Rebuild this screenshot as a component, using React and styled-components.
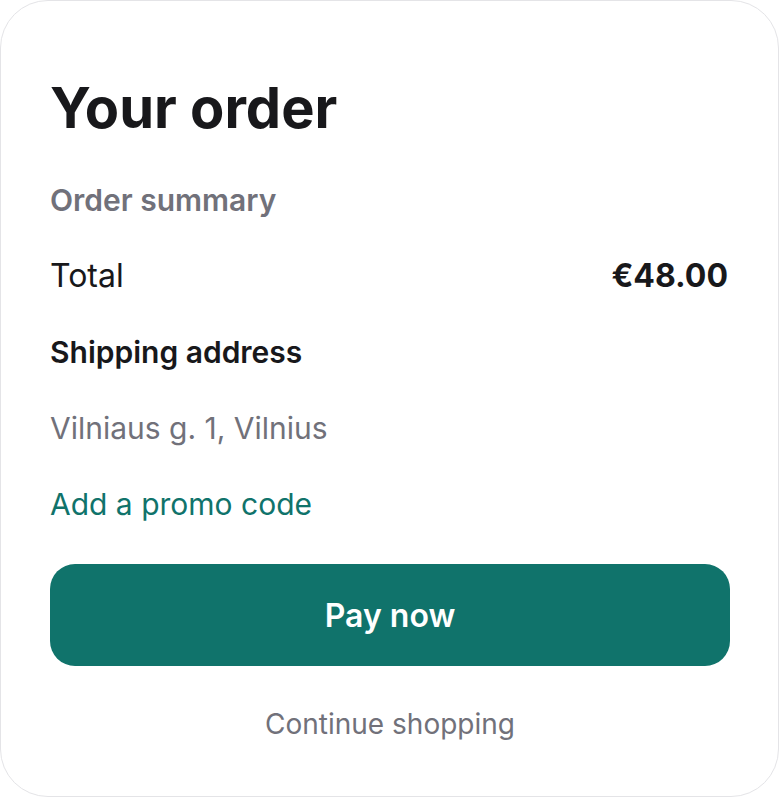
import React from 'react';
import styled, { createGlobalStyle } from 'styled-components';

const GlobalStyle = createGlobalStyle`
  html, body {
    margin: 0;
    padding: 0;
    background: #ffffff;
  }
  body {
    font-family: Inter, "Noto Sans", "Liberation Sans", sans-serif;
    -webkit-font-smoothing: antialiased;
  }
  * {
    box-sizing: border-box;
  }
`;

const App = () => (
  <>
    <GlobalStyle />
    <Card>
      <Title>Your order</Title>
      <Label>Order summary</Label>
      <Row>
        <Text $size={32}>Total</Text>
        <Amount $size={32}>€48.00</Amount>
      </Row>
      <Text $weight={600}>Shipping address</Text>
      <Text $muted>Vilniaus g. 1, Vilnius</Text>
      <PromoLink href="#">Add a promo code</PromoLink>
      <PayButton type="button">Pay now</PayButton>
      <ContinueLink href="#">Continue shopping</ContinueLink>
    </Card>
  </>
);

const Card = styled.div`
  width: 779px;
  min-height: 797px;
  display: flex;
  flex-direction: column;
  gap: 40px;
  padding: 73px 48px 54px 49px;
  border: 1px solid #e4e4e7;
  border-radius: 48px;
  background: #ffffff;
  color: #18181b;
`;

const Title = styled.h1`
  margin: 0;
  font-size: 56px;
  font-weight: 700;
  line-height: 68px;
  color: #18181b;
`;

const Text = styled.div`
  font-size: ${(p) => p.$size || 30}px;
  line-height: 36px;
  font-weight: ${(p) => p.$weight || 400};
  color: ${(p) => (p.$muted ? '#71717a' : '#18181b')};
`;

const Label = styled(Text)`
  font-weight: 600;
  color: #71717a;
`;

const Row = styled.div`
  display: flex;
  justify-content: space-between;
  align-items: center;
  padding-right: 2px;
`;

const Amount = styled(Text)`
  font-weight: 700;
`;

const PromoLink = styled.a`
  align-self: flex-start;
  font-size: 30px;
  line-height: 36px;
  color: #10736b;
  text-decoration: none;
`;

const PayButton = styled.button`
  margin-top: 2px;
  height: 102px;
  width: 100%;
  border: none;
  border-radius: 25px;
  background: #10736b;
  color: #ffffff;
  font-family: inherit;
  font-size: 32px;
  font-weight: 600;
  cursor: pointer;
`;

const ContinueLink = styled.a`
  align-self: center;
  font-size: 28px;
  line-height: 36px;
  color: #71717a;
  text-decoration: none;
`;

export default App;
